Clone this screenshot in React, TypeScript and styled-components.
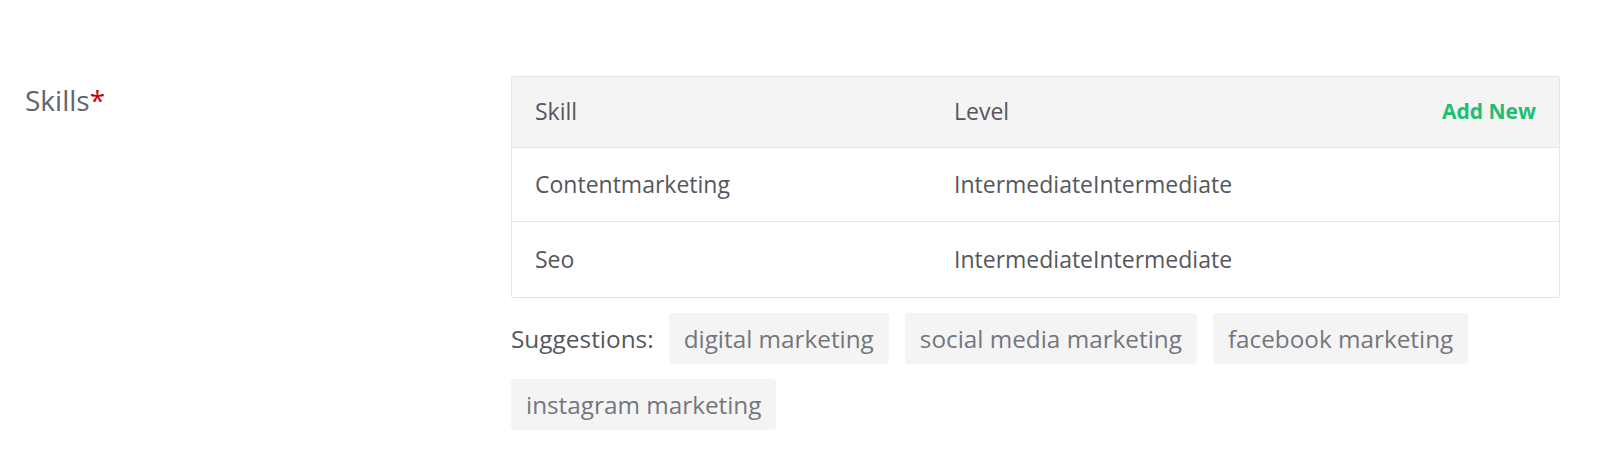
import React from "react";
import styled, { createGlobalStyle } from "styled-components";

const GlobalStyle = createGlobalStyle`
  html, body {
    margin: 0;
    padding: 0;
    background: #fff;
  }
  body {
    font-family: "Open Sans", "Liberation Sans", Arial, sans-serif;
    color: #62646a;
  }
`;

const FormRow = styled.div`
  display: grid;
  grid-template-columns: 511px 1049px;
  padding: 76px 0 40px 0;
`;

const FieldLabel = styled.div`
  padding-left: 25px;
  font-size: 28px;
  line-height: 36px;
  margin-top: 6px;
  color: #62646a;
  span {
    color: #c70000;
  }
`;

const FieldBody = styled.div`
  display: flex;
  flex-direction: column;
`;

const Table = styled.div`
  border: 1px solid #e4e5e7;
  border-radius: 2px;
  overflow: hidden;
`;

const Row = styled.div<{ $head?: boolean }>`
  box-sizing: border-box;
  display: grid;
  grid-template-columns: 419px 1fr auto;
  align-items: center;
  padding: 0 23px 2px;
  height: ${(p) => (p.$head ? "70px" : "74px")};
  background: ${(p) => (p.$head ? "#f4f4f4" : "#fff")};
  & + & {
    border-top: 1px solid #e4e5e7;
  }
  &:last-child {
    height: 76px;
  }
  font-size: 23px;
  color: #55575d;
`;

const AddNew = styled.a`
  color: #1dbf73;
  font-weight: 700;
  font-size: 21px;
  text-decoration: none;
  cursor: pointer;
`;

const Suggestions = styled.div`
  display: flex;
  flex-wrap: wrap;
  align-items: center;
  gap: 15px 16px;
  margin-top: 15px;
`;

const SuggestLabel = styled.span`
  font-size: 24.4px;
  color: #55575d;
  margin-right: -1px;
`;

const Chip = styled.button`
  border: none;
  background: #f4f4f4;
  border-radius: 4px;
  padding: 7px 15px;
  font-family: inherit;
  font-size: 24.3px;
  line-height: 37px;
  color: #74767e;
  cursor: pointer;
`;

const skills = [
  { name: "Contentmarketing", level: "IntermediateIntermediate" },
  { name: "Seo", level: "IntermediateIntermediate" },
];

const suggestions = [
  "digital marketing",
  "social media marketing",
  "facebook marketing",
  "instagram marketing",
];

const App = () => {
  return (
    <>
      <GlobalStyle />
      <FormRow>
        <FieldLabel>
          Skills<span>*</span>
        </FieldLabel>
        <FieldBody>
          <Table>
            <Row $head>
              <div>Skill</div>
              <div>Level</div>
              <AddNew>Add New</AddNew>
            </Row>
            {skills.map((s) => (
              <Row key={s.name}>
                <div>{s.name}</div>
                <div>{s.level}</div>
                <div />
              </Row>
            ))}
          </Table>
          <Suggestions>
            <SuggestLabel>Suggestions:</SuggestLabel>
            {suggestions.map((s) => (
              <Chip key={s}>{s}</Chip>
            ))}
          </Suggestions>
        </FieldBody>
      </FormRow>
    </>
  );
};

export default App;
